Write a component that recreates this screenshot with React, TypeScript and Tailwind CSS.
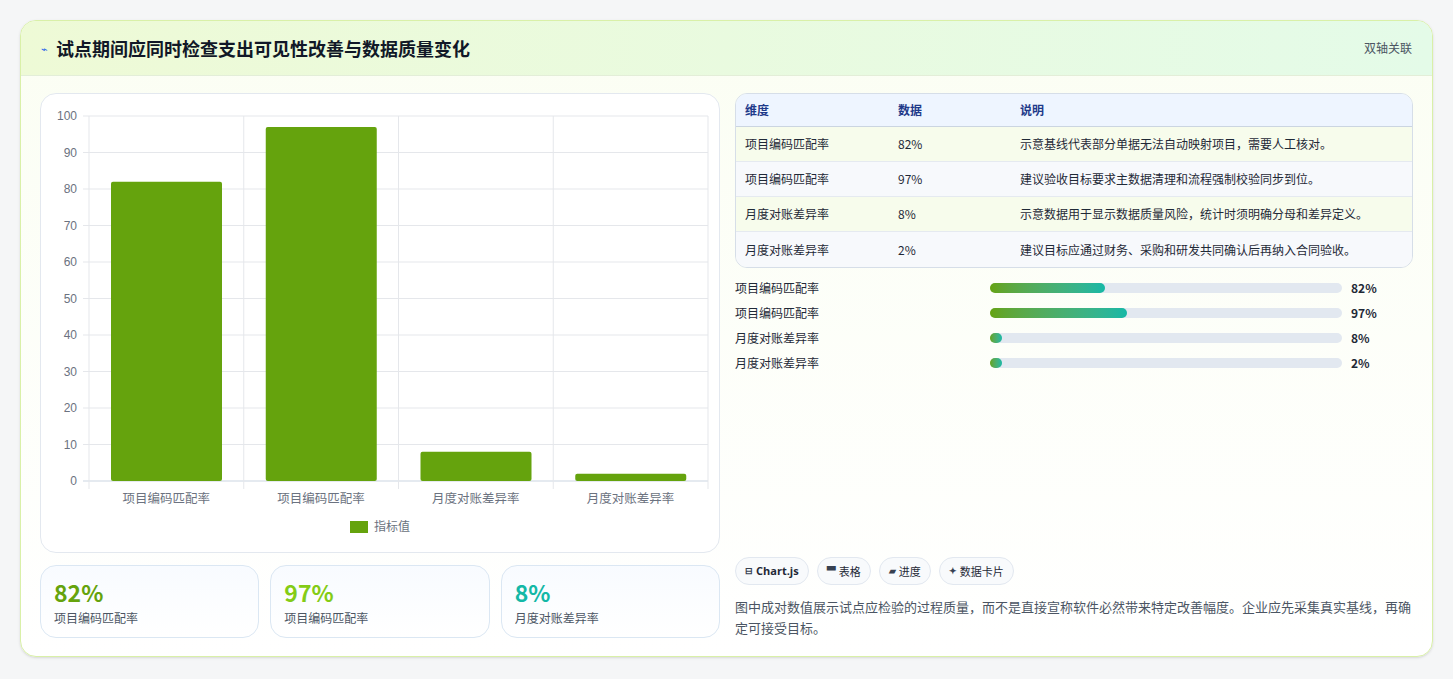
const font = { fontFamily: '"Noto Sans CJK SC", "Noto Sans", sans-serif' };

const values = [
  { label: '项目编码匹配率', value: 82, note: '示意基线代表部分单据无法自动映射项目，需要人工核对。' },
  { label: '项目编码匹配率', value: 97, note: '建议验收目标要求主数据清理和流程强制校验同步到位。' },
  { label: '月度对账差异率', value: 8, note: '示意数据用于显示数据质量风险，统计时须明确分母和差异定义。' },
  { label: '月度对账差异率', value: 2, note: '建议目标应通过财务、采购和研发共同确认后再纳入合同验收。' },
];

function BarChart() {
  const left = 48;
  const top = 22;
  const w = 619;
  const h = 365;
  const cw = w / 4;
  return (
    <svg width="678" height="458" className="block" style={{ fontFamily: '"Liberation Sans", "Noto Sans CJK SC", sans-serif' }}>
      {[0, 10, 20, 30, 40, 50, 60, 70, 80, 90, 100].map((t) => {
        const y = top + h - (t / 100) * h;
        return (
          <g key={t}>
            <line x1={left - 6} x2={left + w} y1={y} y2={y} stroke={t === 0 ? '#cbd5e1' : '#e5e7eb'} />
            <text x={left - 12} y={y + 4} textAnchor="end" fontSize="12" fill="#6b7280">{t}</text>
          </g>
        );
      })}
      {[0, 1, 2, 3, 4].map((i) => (
        <line key={i} x1={left + i * cw} x2={left + i * cw} y1={top} y2={top + h + 8} stroke="#e5e7eb" />
      ))}
      {values.map((v, i) => {
        const bh = (v.value / 100) * h;
        return (
          <g key={i}>
            <rect x={left + i * cw + 22} y={top + h - bh} width={111} height={bh} rx="2" fill="#65a30d" />
            <text x={left + i * cw + cw / 2} y={top + h + 22} textAnchor="middle" fontSize="12.5" fill="#6b7280" style={font}>{v.label}</text>
          </g>
        );
      })}
      <rect x={309} y={427} width={18} height={12} fill="#65a30d" />
      <text x={333} y={437} fontSize="12" fill="#6b7280" style={font}>指标值</text>
    </svg>
  );
}

export default function App() {
  return (
    <div className="min-h-[679px] bg-[#f5f6f7] p-5 pb-0" style={font}>
      <div className="overflow-hidden rounded-2xl border border-[#d9f0a8] bg-gradient-to-b from-[#fbfef3] to-white shadow-sm">
        <div className="flex h-[55px] items-center justify-between border-b border-[#e3eed8] bg-gradient-to-r from-[#eefad6] to-[#e4fbe8] px-5">
          <div className="flex items-center gap-2">
            <span className="text-[11px] text-[#2563eb]">⌁</span>
            <h1 className="text-[18px] font-bold text-[#111827]">试点期间应同时检查支出可见性改善与数据质量变化</h1>
          </div>
          <span className="text-[12px] text-[#4b5563]">双轴关联</span>
        </div>
        <div className="flex gap-[15px] px-[19px] pb-[18px] pt-[17px]">
          <div className="flex w-[680px] flex-col gap-3">
            <div className="rounded-2xl border border-[#e3e8ef] bg-white">
              <BarChart />
            </div>
            <div className="grid grid-cols-3 gap-[11px]">
              {[
                ['82%', '项目编码匹配率', 'text-[#65a30d]'],
                ['97%', '项目编码匹配率', 'text-[#84cc16]'],
                ['8%', '月度对账差异率', 'text-[#14b8a6]'],
              ].map(([v, l, c], i) => (
                <div key={i} className="h-[73px] rounded-2xl border border-[#dbe7f3] bg-gradient-to-b from-[#f8fbff] to-white px-[13px] pt-[12px]">
                  <div className={`text-[23px] font-bold leading-[28px] ${c}`}>{v}</div>
                  <div className="mt-[3px] text-[12px] text-[#4b5563]">{l}</div>
                </div>
              ))}
            </div>
          </div>
          <div className="flex w-[679px] flex-col">
            <div className="overflow-hidden rounded-xl border border-[#d6dee8] text-[12px] text-[#1f2937]">
              <div className="flex h-[33px] items-center border-b border-[#cbd5e1] bg-[#eef5ff] font-bold text-[#1e3a8a]">
                <div className="w-[162px] pl-[9px]">维度</div>
                <div className="w-[122px]">数据</div>
                <div>说明</div>
              </div>
              {values.map((v, i) => (
                <div key={i} className={`flex h-[35px] items-center ${i < 3 ? 'border-b border-[#e5eaf0]' : ''} ${i % 2 ? 'bg-[#f7f9fc]' : 'bg-[#f7fcec]'}`}>
                  <div className="w-[162px] pl-[9px]">{v.label}</div>
                  <div className="w-[122px]">{v.value}%</div>
                  <div>{v.note}</div>
                </div>
              ))}
            </div>
            <div className="mt-[11px] flex flex-col gap-[7px]">
              {values.map((v, i) => (
                <div key={i} className="flex h-[18px] items-center text-[12px] text-[#1f2937]">
                  <div className="w-[255px]">{v.label}</div>
                  <div className="h-[10px] w-[352px] rounded-full bg-[#e2e8f0]">
                    <div
                      className="h-full rounded-full bg-gradient-to-r from-[#65a30d] to-[#14b8a6]"
                      style={{ width: `${Math.max(v.value * 0.4, 3.5)}%` }}
                    />
                  </div>
                  <div className="ml-[9px] font-bold">{v.value}%</div>
                </div>
              ))}
            </div>
            <div className="mt-auto flex gap-[8px]">
              {['⊟ Chart.js', '▀ 表格', '▰ 进度', '✦ 数据卡片'].map((t) => {
                const [ic, ...rest] = t.split(' ');
                return (
                  <span key={t} className="flex h-[28px] items-center gap-[3px] rounded-full border border-[#e2e8f0] bg-[#f8fafc] px-[9px] text-[11px] font-bold text-[#1f2937]">
                    <span className="text-[9px] text-[#374151]">{ic}</span>
                    <span className={t.includes('Chart') ? '' : 'font-normal'} style={t.includes('Chart') ? { fontFamily: '"Open Sans", sans-serif' } : undefined}>{rest.join(' ')}</span>
                  </span>
                );
              })}
            </div>
            <p className="mt-[11px] text-[13px] leading-[21px] text-[#4b5563]">
              图中成对数值展示试点应检验的过程质量，而不是直接宣称软件必然带来特定改善幅度。企业应先采集真实基线，再确定可接受目标。
            </p>
          </div>
        </div>
      </div>
    </div>
  );
}
